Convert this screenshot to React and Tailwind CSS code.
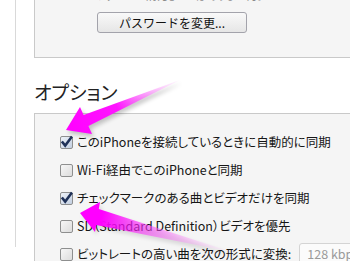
import React from "react";

function CheckBox({ checked }) {
  return (
    <span
      className={
        "relative w-[13px] h-[13px] shrink-0 rounded-[2px] border border-[#8e8f8f] bg-gradient-to-br " +
        (checked ? "from-[#eef2f8] to-[#c3cfe1]" : "from-[#f7f7f7] to-[#dcdcdc]")
      }
    >
      {checked && (
        <svg
          className="absolute left-[-1px] top-[-1px] overflow-visible"
          width="13"
          height="13"
          viewBox="0 0 13 13"
        >
          <path
            d="M2.6 6.4 L5.2 9.6 L11.2 1.6"
            fill="none"
            stroke="#1f3158"
            strokeWidth="2.5"
            strokeLinecap="square"
            strokeLinejoin="miter"
          />
        </svg>
      )}
    </span>
  );
}

function Row({ checked, children, extra }) {
  return (
    <div className="flex items-center h-[28px]">
      <CheckBox checked={checked} />
      <span className="ml-[4px] text-[12.5px] text-[#161616] whitespace-nowrap [font-feature-settings:'palt']">
        {children}
      </span>
      {extra}
    </div>
  );
}

function Arrows() {
  return (
    <svg
      className="absolute left-0 top-0 pointer-events-none"
      width="350"
      height="261"
      viewBox="0 0 350 261"
    >
      <defs>
        <linearGradient id="g1" gradientUnits="userSpaceOnUse" x1="66" y1="130" x2="180" y2="80">
          <stop offset="0" stopColor="#ff00ff" />
          <stop offset="0.45" stopColor="#ff14ff" />
          <stop offset="1" stopColor="#ffd8ff" stopOpacity="0.25" />
        </linearGradient>
        <linearGradient id="g2" gradientUnits="userSpaceOnUse" x1="80" y1="213" x2="232" y2="252">
          <stop offset="0" stopColor="#ff00ff" />
          <stop offset="0.14" stopColor="#ff00ff" />
          <stop offset="0.3" stopColor="#ff10ff" stopOpacity="0.7" />
          <stop offset="1" stopColor="#ffd8ff" stopOpacity="0.1" />
        </linearGradient>
        <filter id="blur" x="-20%" y="-20%" width="140%" height="140%">
          <feGaussianBlur stdDeviation="2" />
        </filter>
      </defs>
      <polygon
        points="66,130 80,107 83.6,115 180,80 88.4,126 92,134"
        fill="#000"
        opacity="0.22"
        filter="url(#blur)"
        transform="translate(2,3)"
      />
      <polygon points="66,130 80,107 83.6,115 180,80 88.4,126 92,134" fill="url(#g1)" />
      <polygon
        points="80,213 100,202 98.8,209 232,252 96.2,225 95,232"
        fill="#000"
        opacity="0.12"
        filter="url(#blur)"
        transform="translate(2,3)"
      />
      <polygon points="80,213 100,202 98.8,209 232,252 96.2,225 95,232" fill="url(#g2)" />
    </svg>
  );
}

export default function App() {
  return (
    <div className="relative w-[350px] h-[261px] overflow-hidden bg-white font-['Noto_Sans_CJK_JP','Noto_Sans',sans-serif]">
      <div className="ml-[15px] border-l border-[#d9d9d9] pl-[18px] h-[261px] w-[420px]">
        {/* top panel */}
        <div className="-mt-[14px] border border-[#c9c9c9] bg-[#f5f5f5] pl-[62px] pb-[24px]">
          <div className="h-[16px] leading-[16px] text-[11px] text-[#8a8a8a] whitespace-nowrap [font-feature-settings:'palt']">
            ファイルが消えることはありません。
          </div>
          <div className="mt-[9px] h-[21px] w-[150px] rounded-[3px] border border-[#a3a3ab] bg-gradient-to-b from-[#f9f9f9] to-[#e6e6e6] flex items-center justify-center text-[12px] text-[#111] leading-none">
            パスワードを変更...
          </div>
        </div>

        {/* heading */}
        <div className="mt-[22px] h-[24px] leading-[24px] text-[19px] text-[#222] [font-feature-settings:'palt']">
          オプション
        </div>

        {/* options panel */}
        <div className="mt-[9px] border-t border-l border-[#c9c9c9] bg-[#f5f5f5] pl-[25px] pt-[14px] h-[200px]">
          <Row checked>このiPhoneを接続しているときに自動的に同期</Row>
          <Row>Wi-Fi経由でこのiPhoneと同期</Row>
          <Row checked>チェックマークのある曲とビデオだけを同期</Row>
          <Row>SD（Standard Definition）ビデオを優先</Row>
          <Row
            extra={
              <div className="ml-[8px] h-[22px] w-[90px] shrink-0 rounded-[3px] border border-[#d4d4d4] bg-[#fbfbfb] pl-[7px] flex items-center text-[12.5px] text-[#9a9a9a] whitespace-nowrap">
                128 kbps
              </div>
            }
          >
            ビットレートの高い曲を次の形式に変換:
          </Row>
        </div>
      </div>
      <Arrows />
    </div>
  );
}
